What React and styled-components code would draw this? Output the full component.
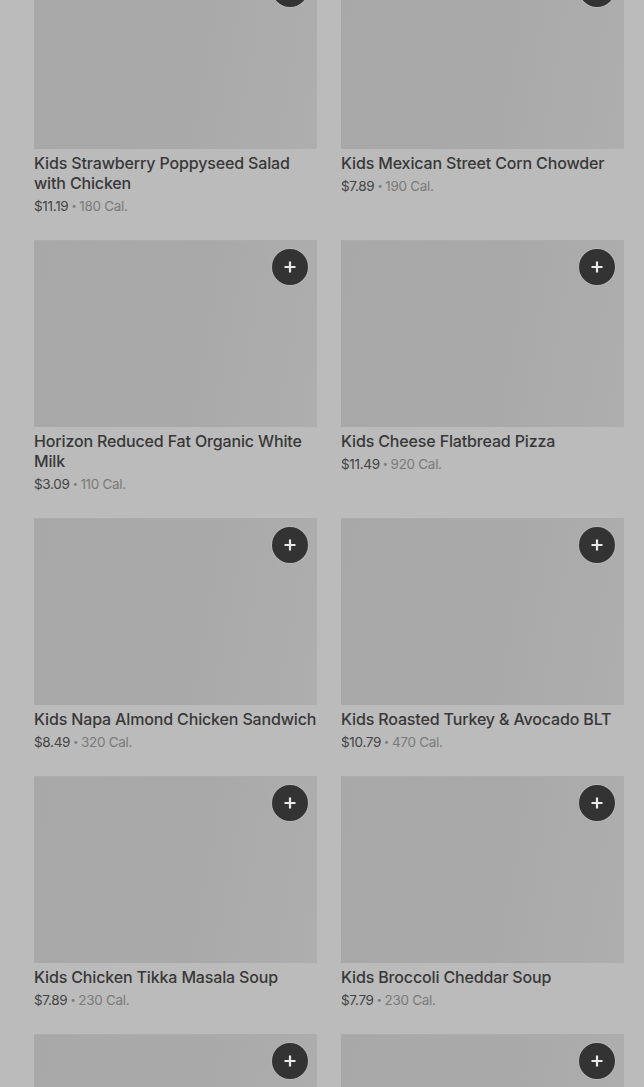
import React from "react";
import styled, { createGlobalStyle } from "styled-components";

const items = [
  { name: "Kids Strawberry Poppyseed Salad with Chicken", price: "$11.19", cal: "180 Cal." },
  { name: "Kids Mexican Street Corn Chowder", price: "$7.89", cal: "190 Cal." },
  { name: "Horizon Reduced Fat Organic White Milk", price: "$3.09", cal: "110 Cal." },
  { name: "Kids Cheese Flatbread Pizza", price: "$11.49", cal: "920 Cal." },
  { name: "Kids Napa Almond Chicken Sandwich", price: "$8.49", cal: "320 Cal." },
  { name: "Kids Roasted Turkey & Avocado BLT", price: "$10.79", cal: "470 Cal." },
  { name: "Kids Chicken Tikka Masala Soup", price: "$7.89", cal: "230 Cal." },
  { name: "Kids Broccoli Cheddar Soup", price: "$7.79", cal: "230 Cal." },
  { name: "", price: "", cal: "" },
  { name: "", price: "", cal: "" },
];

const ItemCard = ({ item }) => (
  <Card>
    <Photo>
      <AddButton aria-label="Add">
        <svg width="14" height="14" viewBox="0 0 14 14">
          <path d="M7 1.5v11M1.5 7h11" stroke="#e9e9e9" strokeWidth="2.2" />
        </svg>
      </AddButton>
    </Photo>
    {item.name && (
      <>
        <Title>{item.name}</Title>
        <Meta>
          <span>{item.price}</span>
          <Dot>•</Dot>
          <Cal>{item.cal}</Cal>
        </Meta>
      </>
    )}
  </Card>
);

const App = () => (
  <>
    <GlobalStyle />
    <Page>
      <Grid>
        {items.map((item, i) => (
          <ItemCard key={i} item={item} />
        ))}
      </Grid>
    </Page>
  </>
);

const GlobalStyle = createGlobalStyle`
  html, body {
    margin: 0;
    padding: 0;
    background: #bbbbbb;
    overflow: hidden;
  }
  body {
    font-family: Inter, "Liberation Sans", sans-serif;
  }
`;

const Page = styled.div`
  width: 644px;
  height: 1087px;
  overflow: hidden;
  background: #bbbbbb;
`;

const Grid = styled.div`
  display: grid;
  grid-template-columns: 283px 283px;
  column-gap: 24px;
  row-gap: 24px;
  padding: 0 20px 0 34px;
  margin-top: -38px;
`;

const Card = styled.div`
  display: flex;
  flex-direction: column;
`;

const Photo = styled.div`
  position: relative;
  height: 187px;
  background: linear-gradient(100deg, #a8a8a8 0%, #a9a9a9 55%, #aeaeae 100%);
  box-shadow: inset 0 1px 0 #acacac;
`;

const AddButton = styled.button`
  position: absolute;
  top: 9px;
  right: 9px;
  width: 36px;
  height: 36px;
  border-radius: 50%;
  border: none;
  padding: 0;
  background: #333333;
  display: flex;
  align-items: center;
  justify-content: center;
  box-shadow: 0 0 0 1px rgba(200, 200, 200, 0.35);
`;

const Title = styled.div`
  margin-top: 4px;
  font-size: 16px;
  line-height: 20px;
  font-weight: 500;
  color: #383838;
  letter-spacing: -0.15px;
`;

const Meta = styled.div`
  margin-top: 3px;
  font-size: 13.5px;
  line-height: 20px;
  color: #444444;
  letter-spacing: -0.3px;
  display: flex;
  align-items: center;
  gap: 3px;
`;

const Dot = styled.span`
  color: #7a7a7a;
  font-size: 9px;
`;

const Cal = styled.span`
  color: #7a7a7a;
`;

export default App;
